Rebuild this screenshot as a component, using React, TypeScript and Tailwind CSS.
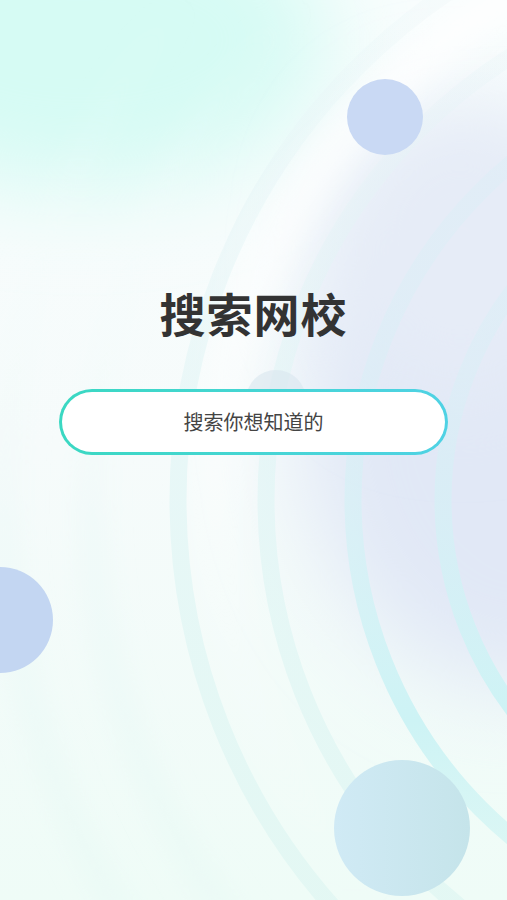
import React from "react";

function Backdrop() {
  return (
    <svg
      className="absolute inset-0 h-full w-full"
      viewBox="0 0 507 900"
      preserveAspectRatio="none"
    >
      <defs>
        <linearGradient id="base" x1="0" y1="0" x2="0" y2="900" gradientUnits="userSpaceOnUse">
          <stop offset="0" stopColor="#f8fdfd" />
          <stop offset="0.5" stopColor="#f6fbfb" />
          <stop offset="1" stopColor="#effcf7" />
        </linearGradient>
        <linearGradient id="ring" x1="0" y1="0" x2="0" y2="900" gradientUnits="userSpaceOnUse">
          <stop offset="0" stopColor="#d6eef6" stopOpacity="0.2" />
          <stop offset="0.45" stopColor="#d6f0f6" stopOpacity="0.45" />
          <stop offset="0.8" stopColor="#cdf3f5" stopOpacity="1" />
          <stop offset="1" stopColor="#d8f6f3" stopOpacity="0.7" />
        </linearGradient>
        <linearGradient id="ringSoft" x1="0" y1="0" x2="0" y2="900" gradientUnits="userSpaceOnUse">
          <stop offset="0" stopColor="#e6f3f6" stopOpacity="0.2" />
          <stop offset="0.5" stopColor="#e0f5f5" stopOpacity="0.65" />
          <stop offset="1" stopColor="#e2f7f3" stopOpacity="0.9" />
        </linearGradient>
        <linearGradient id="ringFaint" x1="0" y1="0" x2="0" y2="900" gradientUnits="userSpaceOnUse">
          <stop offset="0" stopColor="#ffffff" stopOpacity="0" />
          <stop offset="0.6" stopColor="#e6f7f5" stopOpacity="0.5" />
          <stop offset="1" stopColor="#e6f8f4" stopOpacity="0.7" />
        </linearGradient>
        <linearGradient id="glow" x1="0" y1="0" x2="0" y2="900" gradientUnits="userSpaceOnUse">
          <stop offset="0" stopColor="#ffffff" stopOpacity="0.8" />
          <stop offset="0.35" stopColor="#ffffff" stopOpacity="0.55" />
          <stop offset="0.7" stopColor="#ffffff" stopOpacity="0.15" />
          <stop offset="1" stopColor="#ffffff" stopOpacity="0" />
        </linearGradient>
        <linearGradient id="ball" x1="0" y1="0" x2="1" y2="0">
          <stop offset="0" stopColor="#d0eaf5" />
          <stop offset="1" stopColor="#c5e4ea" />
        </linearGradient>
        <filter id="soft" x="-50%" y="-50%" width="200%" height="200%">
          <feGaussianBlur stdDeviation="14" />
        </filter>
        <filter id="haze" x="-50%" y="-50%" width="200%" height="200%">
          <feGaussianBlur stdDeviation="45" />
        </filter>
      </defs>

      <rect width="507" height="900" fill="url(#base)" />
      {/* mint haze top-left */}
      <ellipse cx="80" cy="40" rx="250" ry="150" fill="#d6fbf4" filter="url(#haze)" />
      {/* lavender haze right */}
      <ellipse cx="520" cy="420" rx="220" ry="270" fill="#e1e8f6" filter="url(#haze)" />
      <ellipse cx="460" cy="250" rx="130" ry="150" fill="#e6ecf7" filter="url(#haze)" />

      {/* white glow band along the outer ring */}
      <circle cx="790" cy="500" r="575" fill="none" stroke="url(#glow)" strokeWidth="44" filter="url(#soft)" />

      <circle cx="790" cy="500" r="786" fill="none" stroke="url(#ringFaint)" strokeWidth="20" filter="url(#soft)" />
      <circle cx="790" cy="500" r="699" fill="none" stroke="url(#ringFaint)" strokeWidth="20" filter="url(#soft)" />
      <circle cx="790" cy="500" r="612" fill="none" stroke="url(#ringSoft)" strokeWidth="17" />
      <circle cx="790" cy="500" r="524" fill="none" stroke="url(#ringSoft)" strokeWidth="17" />
      <circle cx="790" cy="500" r="437" fill="none" stroke="url(#ring)" strokeWidth="17" />
      <circle cx="790" cy="500" r="347" fill="none" stroke="url(#ring)" strokeWidth="17" />

      <circle cx="276" cy="400" r="30" fill="#d9e6ef" opacity="0.6" />
      <circle cx="385" cy="117" r="38" fill="#c9d9f4" />
      <circle cx="0" cy="620" r="53" fill="#c3d6f2" />
      <circle cx="402" cy="828" r="68" fill="url(#ball)" />
    </svg>
  );
}

export default function App() {
  return (
    <div
      className="relative h-[900px] w-[507px] overflow-hidden"
      style={{ fontFamily: '"Noto Sans CJK SC", "Noto Sans", sans-serif' }}
    >
      <Backdrop />

      <div className="relative flex flex-col items-center pt-[279px]">
        <h1 className="text-[46px] font-bold leading-[66px] tracking-[1px] text-[#333333]">
          搜索网校
        </h1>

        <div className="mt-[44px] w-[389px] rounded-full bg-gradient-to-r from-[#3ad8c2] to-[#4fd2e4] p-[3px]">
          <div className="flex h-[60px] items-center justify-center rounded-full bg-white">
            <span className="text-[20px] text-[#444444]">搜索你想知道的</span>
          </div>
        </div>
      </div>
    </div>
  );
}
